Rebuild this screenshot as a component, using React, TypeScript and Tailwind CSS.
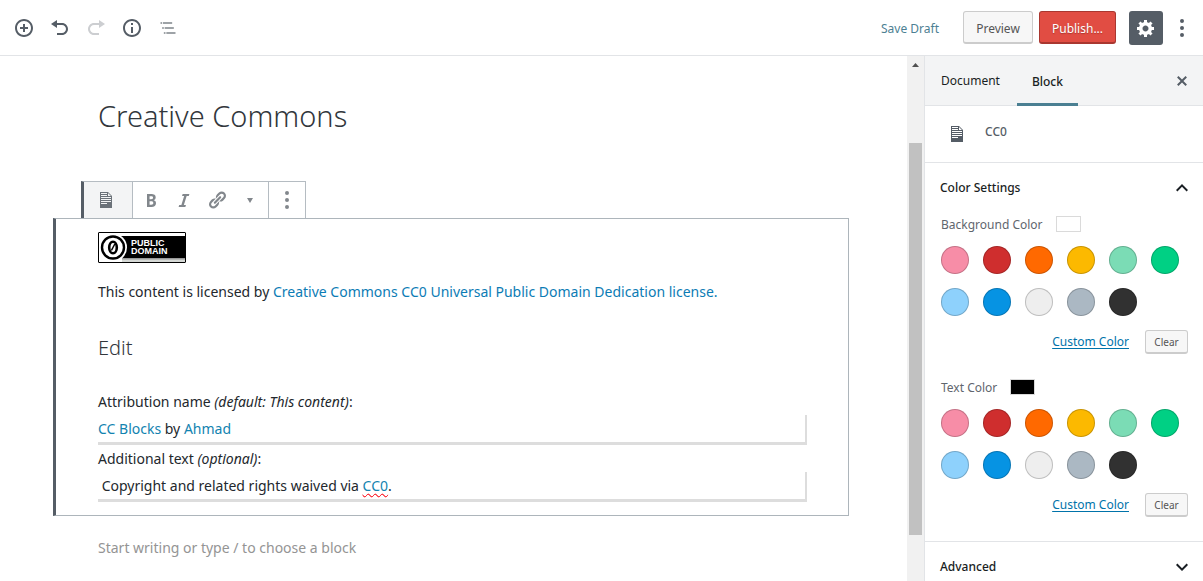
import type { ReactNode } from 'react';

const icons = {
  insert:
    'M10 1c-5 0-9 4-9 9s4 9 9 9 9-4 9-9-4-9-9-9zm0 16c-3.9 0-7-3.1-7-7s3.1-7 7-7 7 3.1 7 7-3.1 7-7 7zm1-11H9v3H6v2h3v3h2v-3h3V9h-3V6z',
  undo: 'M12 5H7V2L1 6l6 4V7h5c2.2 0 4 1.8 4 4s-1.8 4-4 4H7v2h5c3.3 0 6-2.7 6-6s-2.7-6-6-6z',
  redo: 'M8 5h5V2l6 4-6 4V7H8c-2.2 0-4 1.8-4 4s1.8 4 4 4h5v2H8c-3.3 0-6-2.7-6-6s2.7-6 6-6z',
  info: 'M10 1c-5 0-9 4-9 9s4 9 9 9 9-4 9-9-4-9-9-9zm0 16c-3.9 0-7-3.1-7-7s3.1-7 7-7 7 3.1 7 7-3.1 7-7 7zM9 5h2v2H9V5zm0 4h2v6H9V9z',
  outline: 'M5 5H3v2h2V5zm3 8h11v-2H8v2zm9-8H6v2h11V5zM7 11H5v2h2v-2zm0 8h2v-2H7v2zm3-2v2h11v-2H10z',
  gear: 'M18 12h-2.18c-.17.7-.44 1.35-.81 1.93l1.54 1.54-2.1 2.1-1.54-1.54c-.58.36-1.23.63-1.91.79V19H8v-2.18c-.68-.16-1.33-.43-1.91-.79l-1.54 1.54-2.12-2.12 1.54-1.54c-.36-.58-.63-1.23-.79-1.91H1V9.03h2.17c.16-.7.44-1.35.8-1.94L2.43 5.55l2.1-2.1 1.54 1.54c.58-.37 1.24-.64 1.93-.81V2h3v2.18c.68.16 1.33.43 1.91.79l1.54-1.54 2.12 2.12-1.54 1.54c.36.59.64 1.24.8 1.94H18V12zm-8.5 1.5c1.66 0 3-1.34 3-3s-1.34-3-3-3-3 1.34-3 3 1.34 3 3 3z',
  dots: 'M10 1a2 2 0 1 1 0 4a2 2 0 1 1 0-4zm0 7a2 2 0 1 1 0 4a2 2 0 1 1 0-4zm0 7a2 2 0 1 1 0 4a2 2 0 1 1 0-4z',
  close:
    'M14.95 6.46L11.41 10l3.54 3.54-1.41 1.41L10 11.42l-3.53 3.53-1.42-1.42L8.58 10 5.05 6.47l1.42-1.42L10 8.58l3.54-3.53z',
  bold: 'M6 4v13h4.54c1.37 0 2.46-.33 3.26-1 .8-.66 1.2-1.58 1.2-2.77 0-.84-.17-1.51-.51-2.01s-.9-.85-1.67-1.03v-.09c.57-.1 1.02-.4 1.36-.9s.51-1.13.51-1.91c0-1.14-.39-1.98-1.17-2.5C12.75 4.26 11.5 4 9.78 4H6zm2.57 5.15V6.26h1.36c.73 0 1.27.11 1.61.32.34.22.51.58.51 1.07 0 .54-.16.92-.47 1.15s-.82.35-1.51.35h-1.5zm0 2.19h1.6c1.44 0 2.16.53 2.16 1.61 0 .6-.17 1.05-.51 1.34s-.86.43-1.57.43H8.57v-3.38z',
  italic: 'M14.78 6h-2.13l-2.8 9h2.12l-.62 2H4.6l.62-2h2.14l2.8-9H8.03l.62-2h6.75z',
  link: 'M17.74 2.76c1.68 1.69 1.68 4.41 0 6.1l-1.53 1.52c-1.12 1.12-2.7 1.47-4.14 1.09l2.62-2.61.76-.77.76-.76c.84-.84.84-2.2 0-3.04-.84-.85-2.2-.85-3.04 0l-.77.76-3.38 3.38c-.37-1.44-.02-3.02 1.1-4.14l1.52-1.53c1.69-1.68 4.42-1.68 6.1 0zM8.59 13.43l5.34-5.34c.42-.42.42-1.1 0-1.52-.44-.43-1.13-.39-1.53 0l-5.33 5.34c-.42.42-.42 1.1 0 1.52.44.43 1.13.39 1.52 0zm-.76 2.29l4.14-4.15c.38 1.44.03 3.02-1.09 4.14l-1.52 1.53c-1.69 1.68-4.41 1.68-6.1 0-1.68-1.68-1.68-4.42 0-6.1l1.53-1.52c1.12-1.12 2.7-1.47 4.14-1.1l-4.14 4.15c-.85.84-.85 2.2 0 3.05.84.84 2.2.84 3.04 0z',
  text: 'M12 2l4 4v12H4V2h8zM5 3v1h6V3H5zm7 3h3l-3-3v3zM5 5v1h6V5H5zm10 3V7H5v1h10zm0 2V9H5v1h10zm0 2v-1H5v1h10zm-4 2v-1H5v1h6z',
  caret: 'M7 8h6l-3 5z',
  up: 'M12 8l-6 6 1.41 1.41L12 10.83l4.59 4.58L18 14z',
  down: 'M7.41 8.59L12 13.17l4.59-4.58L18 10l-6 6-6-6 1.41-1.41z',
};

function Icon({ name, box = 20, className = 'size-5' }: { name: keyof typeof icons; box?: number; className?: string }) {
  return (
    <svg viewBox={`0 0 ${box} ${box}`} className={`shrink-0 fill-current ${className}`} aria-hidden="true">
      <path fillRule="evenodd" d={icons[name]} />
    </svg>
  );
}

function IconButton({ label, className, children }: { label: string; className: string; children: ReactNode }) {
  return (
    <button type="button" aria-label={label} className={`flex items-center justify-center ${className}`}>
      {children}
    </button>
  );
}

function Header() {
  return (
    <header className="flex h-14 shrink-0 items-center border-b border-[#e2e4e7] pr-[11px] pl-[6px] text-[#555d66]">
      <IconButton label="Add block" className="size-9"><Icon name="insert" /></IconButton>
      <IconButton label="Undo" className="size-9"><Icon name="undo" /></IconButton>
      <IconButton label="Redo" className="size-9 text-[#ccced1]"><Icon name="redo" /></IconButton>
      <IconButton label="Content structure" className="size-9"><Icon name="info" /></IconButton>
      <IconButton label="Block navigation" className="size-9 text-[#7f858b]"><Icon name="outline" box={24} /></IconButton>
      <div className="ml-auto flex items-center text-[12px]">
        <button type="button" className="mr-6 pt-[2px] text-[#4d7f93]">Save Draft</button>
        <button type="button" className="mr-[6px] h-[33px] w-[70px] rounded-[3px] border border-b-2 border-[#ccc] bg-[#f7f7f7] pt-[3px] text-[#555]">
          Preview
        </button>
        <button
          type="button"
          className="mr-[13px] h-[33px] w-[77px] rounded-[3px] border border-b-2 border-[#a93730] bg-[#e14d43] pt-[3px] text-white [text-shadow:0_1px_1px_#a93730]"
        >
          Publish...
        </button>
        <IconButton label="Settings" className="mr-[9px] size-[34px] rounded-[3px] bg-[#555d66] text-white">
          <Icon name="gear" />
        </IconButton>
        <IconButton label="More tools" className="w-5"><Icon name="dots" /></IconButton>
      </div>
    </header>
  );
}

function PublicDomainBadge() {
  return (
    <svg width="88" height="31" viewBox="0 0 88 31" role="img" aria-label="Public Domain" className="block">
      <rect x="0.5" y="0.5" width="87" height="30" rx="0.5" fill="#fff" stroke="#000" />
      <path d="M24 26H87V30H24z" fill="#d5d8d5" />
      <path d="M24 26H87V27.500H24z" fill="#999" />
      <path d="M22 4H87V26H22z" fill="#000" />
      <circle cx="15" cy="15.500" r="14" fill="#fff" />
      <circle cx="15" cy="15.500" r="11" fill="none" stroke="#000" strokeWidth="2.400" />
      <ellipse cx="15" cy="15.500" rx="3.800" ry="5.800" fill="none" stroke="#000" strokeWidth="2.600" />
      <path d="M13.400 18.500L16.800 12" stroke="#000" strokeWidth="1.500" />
      <text x="33" y="14" fill="#fff" className="font-['Liberation_Sans',sans-serif] text-[9px] font-bold">PUBLIC</text>
      <text x="33" y="22" fill="#fff" className="font-['Liberation_Sans',sans-serif] text-[9px] font-bold">DOMAIN</text>
    </svg>
  );
}

function Toolbar() {
  return (
    <div className="ml-7 flex h-[37px] w-fit border-t border-r border-l-3 border-[#b5bcc2] border-l-[#555d66] text-[#82878c]" role="toolbar" aria-label="Block tools">
      <IconButton label="Change block type" className="w-12 bg-[#f3f4f5] pr-1 text-[#6b7279]"><Icon name="text" /></IconButton>
      <div className="flex border-x border-[#b5bcc2] px-[2px]">
        <IconButton label="Bold" className="w-8"><Icon name="bold" /></IconButton>
        <IconButton label="Italic" className="w-[34px]"><Icon name="italic" /></IconButton>
        <IconButton label="Link" className="w-8"><Icon name="link" /></IconButton>
        <IconButton label="More rich text controls" className="w-[33px]"><Icon name="caret" /></IconButton>
      </div>
      <IconButton label="More options" className="w-9"><Icon name="dots" /></IconButton>
    </div>
  );
}

function Field({ id, label, hint, children }: { id: string; label: string; hint: string; children: ReactNode }) {
  return (
    <div>
      <div id={id} className="h-[27px] leading-[27px]">
        {label} <em>{hint}</em>:
      </div>
      <div
        role="textbox"
        aria-labelledby={id}
        contentEditable
        suppressContentEditableWarning
        spellCheck={false}
        className="h-[30px] border-r-2 border-b-3 border-[#ddd] leading-[27px] whitespace-pre-wrap"
      >
        {children}
      </div>
    </div>
  );
}

function Editor() {
  return (
    <main className="min-w-0 flex-1 overflow-hidden pr-[58px] pl-[53px] text-[14px] text-[#23282d]">
      <h1 className="mt-[39px] mb-11 pl-[45px] text-[29px] leading-[42px] font-light text-[#32373c]">Creative Commons</h1>
      <Toolbar />
      <section className="border border-l-3 border-[#adb5bb] border-l-[#555d66] pt-[13px] pr-[41px] pb-[13px] pl-[42px]">
        <PublicDomainBadge />
        <p className="mt-[15px] leading-[27px]">
          This content is licensed by{' '}
          <a href="#license" className="text-[#0c7cb5]">Creative Commons CC0 Universal Public Domain Dedication license.</a>
        </p>
        <h2 className="mt-7 mb-[25px] text-[20px] leading-[30px] font-light text-[#32373c]">Edit</h2>
        <Field id="attribution" label="Attribution name" hint="(default: This content)">
          <a href="#blocks" className="text-[#1283b0]">CC Blocks</a> by <a href="#author" className="text-[#1283b0]">Ahmad</a>
        </Field>
        <Field id="additional" label="Additional text" hint="(optional)">
          {' '}Copyright and related rights waived via{' '}
          <span className="underline decoration-red-500 decoration-wavy decoration-1 underline-offset-2">
            <a href="#cc0" className="text-[#1283b0]">CC0</a>
          </span>
          .
        </Field>
      </section>
      <p className="mt-[18px] pl-[45px] leading-[27px] text-[#949494]">Start writing or type / to choose a block</p>
    </main>
  );
}

function Scrollbar() {
  return (
    <div className="flex w-[17px] shrink-0 flex-col items-center bg-[#f1f1f1]" aria-hidden="true">
      <svg viewBox="0 0 17 17" className="size-[17px] fill-[#505050]"><path d="M5 11h7L8.500 7z" /></svg>
      <div className="mt-[70px] h-[392px] w-[13px] bg-[#c1c1c1]" />
    </div>
  );
}

const swatches = [
  ['Pale pink', 'bg-[#f78da7]'],
  ['Vivid red', 'bg-[#cf2e2e]'],
  ['Luminous vivid orange', 'bg-[#ff6900]'],
  ['Luminous vivid amber', 'bg-[#fcb900]'],
  ['Light green cyan', 'bg-[#7bdcb5]'],
  ['Vivid green cyan', 'bg-[#00d084]'],
  ['Pale cyan blue', 'bg-[#8ed1fc]'],
  ['Vivid cyan blue', 'bg-[#0693e3]'],
  ['Very light gray', 'bg-[#eeeeee]'],
  ['Cyan bluish gray', 'bg-[#abb8c3]'],
  ['Very dark gray', 'bg-[#313131]'],
];

function ColorControl({ title, current }: { title: string; current: string }) {
  return (
    <div role="group" aria-label={title}>
      <div className="flex h-5 items-center gap-[13px] text-[#5f666e]">
        <span className="pt-px">{title}</span>
        <span className={`h-4 w-[25px] border border-[#dadada] ${current}`} />
      </div>
      <div className="mt-3 flex flex-wrap gap-[14px]">
        {swatches.map(([name, color]) => (
          <button key={name} type="button" aria-label={name} className={`size-7 rounded-full border border-black/20 ${color}`} />
        ))}
      </div>
      <div className="mt-[14px] flex items-center justify-end gap-4 pr-px">
        <button type="button" className="text-[#0073aa] underline underline-offset-2">Custom Color</button>
        <button type="button" className="h-6 w-[43px] rounded-[3px] border border-b-2 border-[#ccc] bg-[#f7f7f7] pt-px text-[10px] text-[#555]">
          Clear
        </button>
      </div>
    </div>
  );
}

function Sidebar() {
  return (
    <aside className="w-[279px] shrink-0 overflow-hidden border-l border-[#e2e4e7] text-[12px] text-[#191e23]">
      <div className="flex h-[50px] border-b border-[#e2e4e7] bg-[#f3f4f5]">
        <button type="button" className="pt-px pr-[17px] pl-4">Document</button>
        <button type="button" className="-mb-px border-b-3 border-[#4a7f92] px-[15px] pt-1 font-medium">Block</button>
        <IconButton label="Close settings" className="mr-[11px] ml-auto w-5 text-[#555d66]"><Icon name="close" /></IconButton>
      </div>
      <div className="flex h-[57px] gap-[18px] border-b border-[#e2e4e7] pt-4 pl-[22px] text-[#555d66]">
        <Icon name="text" className="mt-[2px] size-5" />
        <span className="h-5 leading-5 font-medium">CC0</span>
      </div>
      <section className="border-b border-[#e2e4e7] pr-[14px] pb-6 pl-4">
        <button type="button" className="-ml-px flex h-[51px] w-full items-center justify-between pb-[2px] font-medium">
          Color Settings
          <Icon name="up" box={24} className="-mr-[6px] size-6" />
        </button>
        <div className="flex flex-col gap-[23px]">
          <ColorControl title="Background Color" current="bg-white" />
          <ColorControl title="Text Color" current="bg-black" />
        </div>
      </section>
      <button type="button" className="flex h-[49px] w-full items-center justify-between pr-[9px] pl-[15px] font-medium">
        Advanced
        <Icon name="down" box={24} className="size-6" />
      </button>
    </aside>
  );
}

export default function App() {
  return (
    <div className="flex h-screen flex-col overflow-hidden bg-white font-['Noto_Sans','Open_Sans',sans-serif]">
      <Header />
      <div className="flex min-h-0 flex-1">
        <Editor />
        <Scrollbar />
        <Sidebar />
      </div>
    </div>
  );
}
